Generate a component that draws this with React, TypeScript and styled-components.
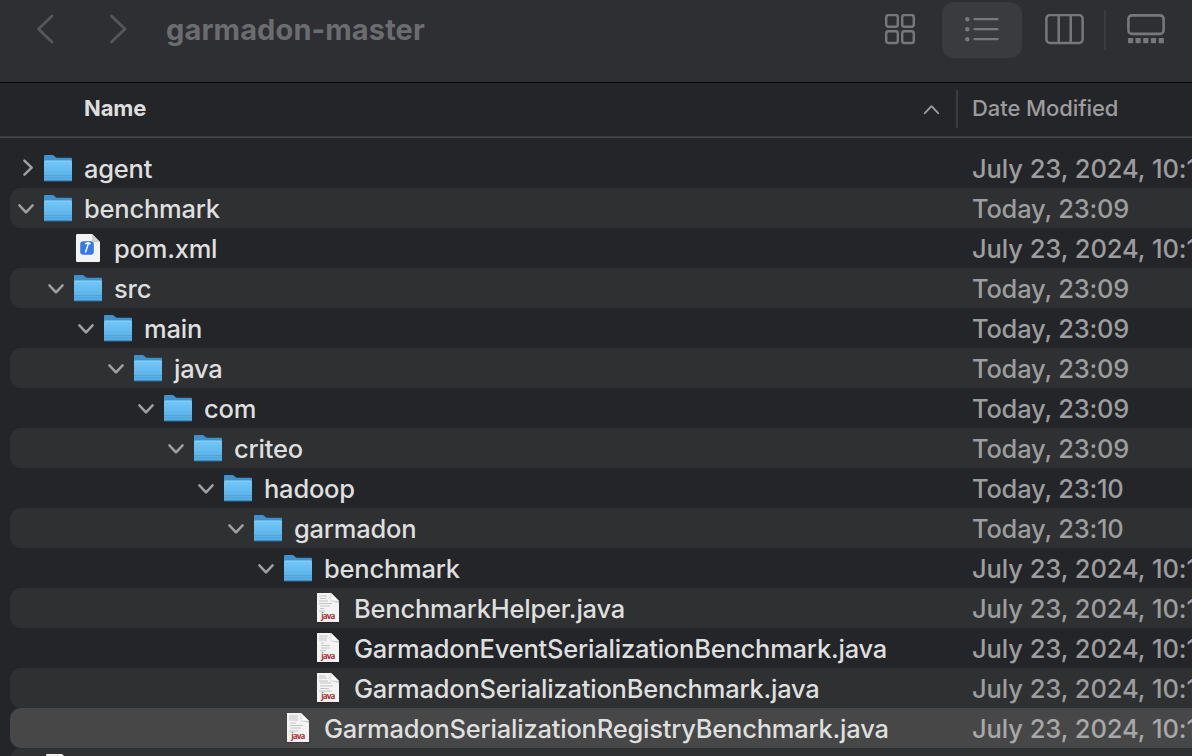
import React from "react";
import styled, { createGlobalStyle } from "styled-components";

const GlobalStyle = createGlobalStyle`
  body { margin: 0; background: #242529; overflow: hidden; }
  * { box-sizing: border-box; }
`;

const Window = styled.main`
  width: 1192px;
  height: 756px;
  overflow: hidden;
  display: flex;
  flex-direction: column;
  background: #242529;
  font-family: Inter, "Liberation Sans", sans-serif;
  white-space: nowrap;
  svg { display: block; flex: none; }
`;

const Toolbar = styled.header`
  flex: none;
  height: 83px;
  display: flex;
  align-items: flex-start;
  background: #2e2f33;
  border-bottom: 1px solid #000;
`;

const Navigation = styled.div`
  width: 166px;
  padding: 14px 0 0 36px;
  display: flex;
  gap: 55px;
`;

const Title = styled.h1`
  margin: 0;
  flex: 1;
  padding-top: 12px;
  font-size: 29px;
  line-height: 36px;
  font-weight: 700;
  letter-spacing: 0.12px;
  color: #6b6c70;
`;

const ViewButton = styled.div<{ $width: number; $active?: boolean }>`
  width: ${(p) => p.$width}px;
  height: 56px;
  margin-top: 2px;
  display: flex;
  align-items: center;
  justify-content: center;
  border-radius: 12px;
  background: ${(p) => (p.$active ? "#3a3b3f" : "transparent")};
`;

const ViewSwitcher = styled.div`
  display: flex;
  width: 334px;
`;

const ToolbarDivider = styled.div`
  width: 2px;
  height: 40px;
  margin-top: 10px;
  background: #3a3b3f;
`;

const ColumnHeader = styled.div`
  flex: none;
  height: 55px;
  padding-bottom: 3px;
  display: flex;
  align-items: center;
  border-bottom: 1px solid #46474b;
  box-shadow: inset 0 -1px #37383c;
  font-size: 22px;
  line-height: 28px;
`;

const NameHeading = styled.div`
  width: 956px;
  padding: 0 16px 2px 84px;
  display: flex;
  justify-content: space-between;
  align-items: center;
  font-weight: 700;
  letter-spacing: -0.1px;
  color: #dedede;
`;

const DateHeading = styled.div`
  flex: 1;
  height: 38px;
  padding: 4px 0 0 14px;
  border-left: 2px solid #3b3c40;
  font-weight: 500;
  letter-spacing: -0.08px;
  color: #9c9c9e;
`;

const List = styled.div`
  padding: 10px 0 0 10px;
`;

const Row = styled.div<{ $tone: "plain" | "stripe" | "selected" }>`
  height: 40px;
  display: flex;
  align-items: center;
  border-radius: 11px 0 0 11px;
  background: ${(p) => ({ plain: "transparent", stripe: "#2f3032", selected: "#474747" })[p.$tone]};
`;

const NameCell = styled.div<{ $level: number }>`
  flex: none;
  width: 962px;
  padding-left: ${(p) => p.$level * 30}px;
  display: flex;
  align-items: center;
`;

const Disclosure = styled.div`
  width: 32px;
  height: 40px;
`;

const IconSlot = styled.div`
  width: 42px;
  height: 40px;
`;

const CellText = styled.span`
  padding-top: 2px;
  font-size: 25.5px;
  font-weight: 450;
  line-height: 38px;
`;

const Name = styled(CellText)`
  letter-spacing: -0.22px;
  color: #dedfdf;
`;

const DateText = styled(CellText)<{ $bright: boolean; $spacing: number }>`
  letter-spacing: ${(p) => p.$spacing}px;
  color: ${(p) => (p.$bright ? "#a8a8a8" : "#9c9d9e")};
`;

const Chevron = ({ open }: { open: boolean }) => (
  <svg width="32" height="40" fill="none" stroke="#a0a0a2" strokeWidth="2.5" strokeLinecap="round" strokeLinejoin="round">
    <path d={open ? "M9.4 17.3 16 24.3l6.6-7" : "m14.4 12.600 7.3 7-7.3 7"} />
  </svg>
);

const FolderIcon = () => (
  <svg width="34" height="40">
    <defs>
      <linearGradient id="folder" x2="0" y2="1">
        <stop stopColor="#75c8f8" />
        <stop offset=".65" stopColor="#5eb5ea" />
        <stop offset="1" stopColor="#56ace2" />
      </linearGradient>
    </defs>
    <path d="M2.500 32.500h27v1.600h-27z" fill="#17191c" opacity=".5" />
    <path d="M2 8.300C2 7.300 2.500 7 3.300 7h7.400c1.700 0 2.300 2.700 4.300 2.700h13.700c.9 0 1.300.5 1.300 1.400V20H2z" fill="#3f92cb" />
    <path d="M2 14c0-1 .4-1.400 1.300-1.400h25.400c.9 0 1.300.4 1.300 1.400v17.700c0 1-.4 1.500-1.300 1.500H3.300c-.9 0-1.300-.5-1.300-1.500z" fill="url(#folder)" />
    <path d="M3 13.200h26" stroke="#8ad3fa" strokeWidth=".8" />
    <path d="M2 27.500h28M2 29.800h28" stroke="#4a9ed4" strokeWidth=".8" />
    <path d="M3 32.600h26" stroke="#3688bf" strokeWidth="1" />
  </svg>
);

const XmlIcon = () => (
  <svg width="34" height="40">
    <path d="M4 7.500C4 6.500 4.500 6 5.500 6H20l8 8v18.500c0 1-.5 1.500-1.500 1.500h-21C4.500 34 4 33.500 4 32.500z" fill="#f3f3f3" />
    <path d="M20 6v6.500c0 1 .5 1.500 1.500 1.500H28z" fill="#d0d0d0" />
    <rect x="8.200" y="13.200" width="13.600" height="13.600" rx="3" fill="#3479ee" />
    <path d="m13.400 24.500 3-9M13.200 15.700l3-.9 2.300 1.200" stroke="#fff" strokeWidth="1.500" fill="none" />
  </svg>
);

const Extension = styled.text`
  font: 700 8px "Open Sans", sans-serif;
  fill: #ad3034;
`;

const CODE_LINES = [
  "M7 8h8M8 10.500h6M7 13h9M7 15.500h13M8 18h10M8 20.500h4M7 23h6",
  "M7 8h9M7 10h8M7 12h8M9 15h3M9 17.500h9M9 20h9M8 22.500h6",
  "M7 8h6M7 10h8M7 13h9M8 15h11M8 18h13M8 20.500h9M7 23h13",
  "M7 8h9M7 10h9M7 12h9M8 15h6M8 17.500h13M8 20h11M7 23h9",
];

const JavaIcon = ({ variant }: { variant: number }) => (
  <svg width="34" height="40">
    <path d="M4.500 34h23" stroke="#151617" opacity=".55" />
    <path d="M5 5h14l8 8v21H5z" fill="#f4f4f4" />
    <path d={CODE_LINES[variant]} stroke="#bbb" strokeWidth=".85" />
    <path d="M19 5v8h8z" fill="#fff" stroke="#c8c8c8" strokeWidth=".6" />
    <path d="M19.500 13H27v2z" fill="#cfcfcf" />
    <Extension x="9.200" y="31" textLength="14.200" lengthAdjust="spacing">java</Extension>
  </svg>
);

const GridIcon = () => (
  <svg width="32" height="32" fill="none" stroke="#77787b" strokeWidth="2.400">
    <rect x="2.200" y="1" width="11.600" height="11.800" rx="2.200" />
    <rect x="18.200" y="1" width="11.600" height="11.800" rx="2.200" />
    <rect x="2.200" y="17.200" width="11.600" height="11.800" rx="2.200" />
    <rect x="18.200" y="17.200" width="11.600" height="11.800" rx="2.200" />
  </svg>
);

const ListIcon = () => (
  <svg width="34" height="26">
    <g fill="#77787b">
      <circle cx="2.300" cy="2.200" r="2.200" />
      <circle cx="2.300" cy="12.200" r="2.200" />
      <circle cx="2.300" cy="22.200" r="2.200" />
    </g>
    <path d="M9.500 2.200h23M9.500 12.200h23M9.500 22.200h23" stroke="#77787b" strokeWidth="2.200" strokeLinecap="round" />
  </svg>
);

const ColumnsIcon = () => (
  <svg width="42" height="32" fill="none" stroke="#77787b" strokeWidth="2.500">
    <rect x="4.400" y="1.100" width="36.200" height="27.800" rx="3.500" />
    <path d="M16.700 2v26M28.700 2v26" />
  </svg>
);

const GalleryIcon = () => (
  <svg width="40" height="32" fill="#77787b">
    <rect x="2.400" y="1.400" width="35.200" height="18.500" rx="3.500" fill="none" stroke="#77787b" strokeWidth="2.600" />
    {[2, 9.500, 17.200, 24.900, 32.700].map((x) => (
      <rect key={x} x={x} y="24" width="5.200" height="5.200" rx=".6" />
    ))}
  </svg>
);

type Kind = "folder" | "xml" | "java";
type Entry = { name: string; level: number; kind: Kind; date: string; open?: boolean; variant?: number };

const JULY = "July 23, 2024, 10:1";
const entries: Entry[] = [
  { name: "agent", level: 0, kind: "folder", date: JULY, open: false },
  { name: "benchmark", level: 0, kind: "folder", date: "Today, 23:09", open: true },
  { name: "pom.xml", level: 1, kind: "xml", date: JULY },
  { name: "src", level: 1, kind: "folder", date: "Today, 23:09", open: true },
  { name: "main", level: 2, kind: "folder", date: "Today, 23:09", open: true },
  { name: "java", level: 3, kind: "folder", date: "Today, 23:09", open: true },
  { name: "com", level: 4, kind: "folder", date: "Today, 23:09", open: true },
  { name: "criteo", level: 5, kind: "folder", date: "Today, 23:09", open: true },
  { name: "hadoop", level: 6, kind: "folder", date: "Today, 23:10", open: true },
  { name: "garmadon", level: 7, kind: "folder", date: "Today, 23:10", open: true },
  { name: "benchmark", level: 8, kind: "folder", date: JULY, open: true },
  { name: "BenchmarkHelper.java", level: 9, kind: "java", date: JULY, variant: 0 },
  { name: "GarmadonEventSerializationBenchmark.java", level: 9, kind: "java", date: JULY, variant: 1 },
  { name: "GarmadonSerializationBenchmark.java", level: 9, kind: "java", date: JULY, variant: 2 },
  { name: "GarmadonSerializationRegistryBenchmark.java", level: 8, kind: "java", date: JULY, variant: 3 },
];

const EntryIcon = ({ entry }: { entry: Entry }) => {
  if (entry.kind === "folder") return <FolderIcon />;
  if (entry.kind === "xml") return <XmlIcon />;
  return <JavaIcon variant={entry.variant ?? 0} />;
};

const toneOf = (index: number) => (index === entries.length - 1 ? "selected" : index % 2 ? "stripe" : "plain");

export default function App() {
  return (
    <Window>
      <GlobalStyle />
      <Toolbar>
        <Navigation>
          <svg width="18" height="30" fill="none" stroke="#56575b" strokeWidth="2.800" strokeLinecap="round" strokeLinejoin="round">
            <path d="M16 2 2.500 15 16 28" />
          </svg>
          <svg width="18" height="30" fill="none" stroke="#56575b" strokeWidth="2.800" strokeLinecap="round" strokeLinejoin="round">
            <path d="m2.500 2 13.500 13L2.500 28" />
          </svg>
        </Navigation>
        <Title>garmadon-master</Title>
        <ViewSwitcher>
          <ViewButton $width={84}><GridIcon /></ViewButton>
          <ViewButton $width={80} $active><ListIcon /></ViewButton>
          <ViewButton $width={82}><ColumnsIcon /></ViewButton>
          <ToolbarDivider />
          <ViewButton $width={80}><GalleryIcon /></ViewButton>
        </ViewSwitcher>
      </Toolbar>
      <ColumnHeader>
        <NameHeading>
          <span>Name</span>
          <svg width="18" height="14" fill="none" stroke="#9c9c9e" strokeWidth="1.900" strokeLinecap="round" strokeLinejoin="round">
            <path d="m2.800 12.200 6.700-7 6.700 7" />
          </svg>
        </NameHeading>
        <DateHeading>Date Modified</DateHeading>
      </ColumnHeader>
      <List>
        {entries.map((entry, i) => (
          <Row key={i} $tone={toneOf(i)}>
            <NameCell $level={entry.level}>
              <Disclosure>{entry.open !== undefined && <Chevron open={entry.open} />}</Disclosure>
              <IconSlot><EntryIcon entry={entry} /></IconSlot>
              <Name>{entry.name}</Name>
            </NameCell>
            <DateText $bright={toneOf(i) === "selected"} $spacing={entry.date === JULY ? -0.08 : -0.22}>{entry.date}</DateText>
          </Row>
        ))}
        <Row $tone="stripe">
          <NameCell $level={0}>
            <Disclosure />
            <IconSlot>
              <svg width="34" height="40"><path d="M4 7q0-1 1-1h15l2 2v24H4z" fill="#eee" /></svg>
            </IconSlot>
          </NameCell>
        </Row>
      </List>
    </Window>
  );
}
